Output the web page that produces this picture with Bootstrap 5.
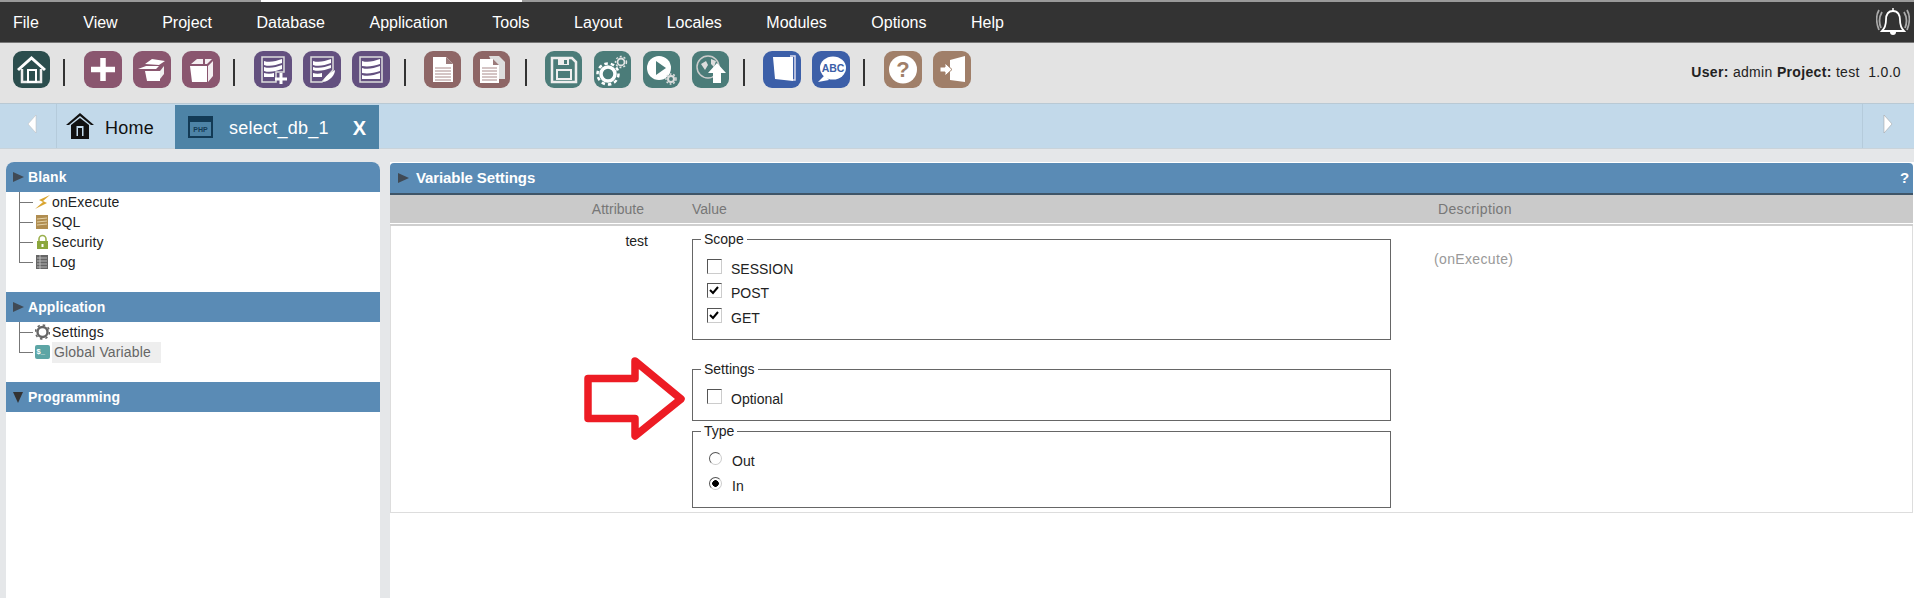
<!DOCTYPE html>
<html lang="en">
<head>
<meta charset="utf-8">
<title>Variable Settings</title>
<link href="https://cdn.jsdelivr.net/npm/bootstrap@5.3.0/dist/css/bootstrap.min.css" rel="stylesheet">
<style>
html,body{height:598px;overflow:hidden}
body{font-family:"Liberation Sans",Arial,sans-serif;font-size:14px;background:#e5e7e9;color:#222}
.top-strip{height:2px;background:#9a9a9a}
.top-strip i{display:block;height:2px;width:261px;margin-left:261px;background:#fff}
.menu-bar{height:41px;background:#333;border-bottom:1px solid #777;padding-left:13px;gap:44.500px;color:#fff;font-size:16px}
.menu-bar span{line-height:41px}
.bell-box{margin-left:auto;margin-right:4px}
.tool-bar{height:60px;background:#e3e3e3;padding-left:13px}
.tile{width:37px;height:37px;border-radius:9px;margin-top:8px;margin-right:12px;display:block;flex:none}
.tile.wide{width:38px;margin-right:11px}
.tile svg{display:block;width:100%;height:100%}
.sep{width:2px;height:27px;background:#333;margin:16px 18px 0 2px;flex:none}
.sep.s-a{margin-left:1px;margin-right:19px}
.sep.s-b{margin-right:19px}
.sep.s-c{margin-left:3px}
.sep.s-e{margin-right:19px}
.c-home{background:#2b4d4d}.c-mar{background:#8a566f}.c-pur{background:#63507f}.c-rose{background:#8e6666}.c-teal{background:#4b7c79}.c-blue{background:#3c5fa8}.c-tan{background:#a07f69}
.user-info{margin-left:auto;margin-right:13px;line-height:58px;font-size:14px;letter-spacing:.33px;white-space:pre;color:#222}
.tab-bar{height:46px;background:#c2d9ea;border-top:1px solid #b9c9d4;border-bottom:1px solid #c9d3da}
.nav-end{width:57px;flex:none;border-right:1px solid #b5cbdb;padding:0 0 4px 8px}
.nav-end.last{width:52px;margin-left:auto;border-right:0;border-left:1px solid #b5cbdb;padding:0 2px 4px 0}
.home-tab{width:118px;font-size:18px;color:#111;padding-left:8px;gap:10px}
.home-tab span{padding-top:5px;letter-spacing:.25px}
.cur-tab{width:204px;height:44px;margin-top:1px;background:#4d83a6;color:#fff;font-size:18px;padding-left:12px}
.cur-tab .x-mark{font-weight:700;font-size:20px;margin-left:24px;padding-top:2px}
.cur-tab .tab-name{margin-left:15px;padding-top:3px;letter-spacing:.25px}
.work{height:449px;padding-top:13px}
.side-col{width:374px;margin-left:6px;background:#fff;flex:none;border-radius:8px 8px 0 0}
.bar-head{height:30px;background:#5a8bb5;color:#fff;font-weight:700;font-size:14px;letter-spacing:.1px;padding-left:7px;gap:4px}
.bar-head.round{border-radius:8px 8px 0 0}
.bar-head .tri.down{margin-right:1px}
.tri{width:0;height:0;border-left:11px solid #404a55;border-top:5.500px solid transparent;border-bottom:5.500px solid transparent;flex:none}
.tri.down{border-left:5.500px solid transparent;border-right:5.500px solid transparent;border-top:11px solid #333;border-bottom:0}
.tree-list{list-style:none;margin:0 0 20px;padding:0 0 0 13px}
.tree-list li{height:20px;position:relative;padding-left:16px;gap:2px;color:#222;letter-spacing:.15px}
.tree-list li::before{content:"";position:absolute;left:0;top:0;bottom:0;width:1px;background:#777}
.tree-list li:last-child::before{bottom:10px}
.tree-list li::after{content:"";position:absolute;left:0;top:10px;width:14px;height:1px;background:#777}
.tree-ico{width:15px;height:16px;flex:none;display:block}
.sel-node{background:#eee;color:#666;padding:0 8px 0 2px;line-height:21px;width:109px;white-space:nowrap}
.main-col{margin-left:10px;flex:1;background:#fff;min-width:0;padding-top:1px}
.panel-head{height:32px;background:#5a8bb5;border-bottom:2px solid #3f5568;color:#fff;font-weight:700;font-size:15px;letter-spacing:-.1px;padding-left:8px;gap:7px;margin-right:1px;border-radius:4px 4px 0 0}
.panel-head .help{margin-left:auto;margin-right:4px}
.col-heads{height:28px;background:#cacaca;color:#777;margin-right:1px;border-bottom:0}
.c-a{width:257px;flex:none;text-align:right}
.c-v{width:699px;margin-left:44px;flex:none}
.c-d{margin-left:44px;letter-spacing:.35px}
.col-heads .c-a{padding-right:3px}
.col-heads .c-v{padding-left:1px}
.col-heads .c-d{padding-left:4px}
.rule{height:2px;margin-top:1px;background:#cfcfcf;margin-right:1px}
.data-row{position:relative;border:1px solid #ddd;border-top:0;height:287px;padding-top:3px;margin-right:1px}
.data-row .c-a{line-height:20px;padding-top:2px}
.data-row .c-d{color:#999;padding-top:20px;margin-left:43px}
.opt-set{border:1px solid #666;padding:5px 0 0 14px;margin:0;color:#222;min-width:0}
.opt-set legend{float:none;width:auto;font-size:14px;line-height:20px;margin:0 0 0 -6px;padding:0 3px}
.opt-set.s1{height:111px;margin-bottom:19px}
.opt-set.s2{height:62px;margin-bottom:0}
.opt-set.s3{height:87px}
.opt-row{height:24.500px;gap:9px;display:flex;align-items:center;margin:0;font-size:14px}
.opt-row span{position:relative;top:3px}
.opt-row input{appearance:none;-webkit-appearance:none;flex:none;margin:0;width:15px;height:15px;background:#fff;border:1px solid #ccc;border-top-color:#555;border-left-color:#555}
.opt-row input:checked{background:#fff url("data:image/svg+xml,%3Csvg xmlns='http://www.w3.org/2000/svg' viewBox='0 0 15 15'%3E%3Cpath d='M3 7l3 3 5-6' fill='none' stroke='%23000' stroke-width='2'/%3E%3C/svg%3E") center/15px no-repeat}
.opt-row input[type=radio]{width:13px;height:13px;margin-left:2px;border-radius:50%;margin-right:2px}
.opt-row input[type=radio]:checked{background:radial-gradient(circle,#000 0 3px,#fff 3.600px)}
.rad-row{height:25px;gap:8px}
.big-arrow{position:absolute;left:192px;top:130px;width:108px;height:86px;pointer-events:none}
</style>
</head>
<body>
<div class="top-strip"><i></i></div>
<div class="menu-bar d-flex align-items-start">
<span>File</span><span>View</span><span>Project</span><span>Database</span><span>Application</span><span>Tools</span><span>Layout</span><span>Locales</span><span>Modules</span><span>Options</span><span>Help</span>
<div class="bell-box">
<svg width="34" height="32" viewBox="0 0 34 32" class="mt-1"><path d="M17 5c-5 0-7 4-7 9 0 5-1 8-4 11h22c-3-3-4-6-4-11 0-5-2-9-7-9z" fill="none" stroke="#fff" stroke-width="1.800"/><path d="M14 26a3 3 0 0 0 6 0z" fill="#fff"/><path d="M17 2v3" stroke="#fff" stroke-width="1.500"/><path d="M6 6C3 11 3 17 5 22M3 4C0 9 0 17 3 24M28 6c3 5 3 11 1 16M31 4c3 5 3 13 0 20" fill="none" stroke="#aaa" stroke-width="1.800"/></svg>
</div>
</div>
<div class="tool-bar d-flex align-items-start">
<a class="tile c-home"><svg viewBox="0 0 37 37"><path d="M5 19 18.500 7 32 19" fill="none" stroke="#fff" stroke-width="3"/><path d="M9 18v13h19V18" fill="none" stroke="#eee" stroke-width="2.500"/><rect x="15" y="19" width="8" height="12" fill="none" stroke="#fff" stroke-width="2"/></svg></a><div class="sep s-a"></div>
<a class="tile wide c-mar"><svg viewBox="0 0 38 37"><path d="M19 7v23M7 18.500h24" stroke="#fff" stroke-width="5.500"/></svg></a>
<a class="tile wide c-mar"><svg viewBox="0 0 38 37"><path d="M12 20h15v10H14z" fill="#fff"/><path d="M5 18l8-3h13l-3 3zM12 13l7-5 13 2-6 4z" fill="#fff"/><path d="M27 20l4-5v8l-4 5z" fill="#eee"/></svg></a>
<a class="tile wide c-mar"><svg viewBox="0 0 38 37"><path d="M8 15h17v16H10z" fill="#fff"/><path d="M26 15l5-5v15l-5 6zM9 13l6-5h6v5zM23 13V8h7l-5 5z" fill="#fff" opacity=".9"/></svg></a>
<div class="sep s-b"></div>
<a class="tile wide c-pur"><svg viewBox="0 0 38 37"><path d="M8 6h22v15h-8v10H8z" fill="none" stroke="#ddd" stroke-width="1.500"/><path d="M10 10c6 2 12 0 18-2v4c-6 2-12 4-18 2zM10 16c6 2 12 0 18-2v4c-6 2-12 4-18 2zM10 22c3 1 7 1 10 0v4H10z" fill="#fff"/><path d="M27 22v11M21 28h12" stroke="#fff" stroke-width="3"/></svg></a>
<a class="tile wide c-pur"><svg viewBox="0 0 38 37"><path d="M8 6h22v13l-11 12H8z" fill="none" stroke="#ddd" stroke-width="1.500"/><path d="M10 10c6 2 12 0 18-2v4c-6 2-12 4-18 2zM10 16c6 2 12 0 18-2v3c-6 2-12 4-18 2zM10 22c3 1 6 1 9 0v4h-9z" fill="#fff"/><path d="M20 31c1-5 7-9 12-12 0 5-5 11-12 12z" fill="#fff"/></svg></a>
<a class="tile wide c-pur"><svg viewBox="0 0 38 37"><rect x="8" y="6" width="22" height="25" fill="none" stroke="#ddd" stroke-width="1.500"/><path d="M10 10c6 2 12 0 18-2v5c-6 2-12 3-18 2zM10 17c6 2 12 0 18-2v5c-6 2-12 3-18 2zM10 24c6 2 12 0 18-2v6H10z" fill="#fff"/></svg></a>
<div class="sep s-c"></div>
<a class="tile c-rose"><svg viewBox="0 0 37 37"><path d="M9 6h13l7 7v18H9z" fill="#fff"/><path d="M22 6l7 7h-7z" fill="#9b7b7b"/><path d="M11 17h16M11 20h16M11 23h16M11 26h16M11 29h16" stroke="#a98a8a" stroke-width="1"/></svg></a>
<a class="tile c-rose"><svg viewBox="0 0 37 37"><path d="M16 5h10l6 6v17h-6z" fill="#ddd"/><path d="M7 8h13l6 6v18H7z" fill="#fff"/><path d="M20 8l6 6h-6z" fill="#9b7b7b"/><path d="M9 17h15M9 20h15M9 23h15M9 26h15M9 29h15" stroke="#a98a8a"/></svg></a>
<div class="sep s-c"></div>
<a class="tile c-teal"><svg viewBox="0 0 37 37"><path d="M7 7h20l4 4v20H7z" fill="none" stroke="#eee" stroke-width="2.500"/><rect x="13" y="8" width="11" height="6" fill="#eee"/><rect x="19" y="9" width="3" height="4" fill="#4b7c79"/><rect x="12" y="19" width="14" height="9" fill="none" stroke="#eee" stroke-width="2"/></svg></a>
<a class="tile c-teal"><svg viewBox="0 0 37 37"><circle cx="14" cy="23" r="7" fill="none" stroke="#fff" stroke-width="3.500"/><circle cx="14" cy="23" r="10.500" fill="none" stroke="#fff" stroke-width="2.500" stroke-dasharray="3.500 3"/><circle cx="27" cy="11" r="3.500" fill="none" stroke="#e4e4e4" stroke-width="1.800"/><circle cx="27" cy="11" r="5.500" fill="none" stroke="#e4e4e4" stroke-width="1.400" stroke-dasharray="2 2"/></svg></a>
<a class="tile c-teal"><svg viewBox="0 0 37 37"><circle cx="16" cy="17" r="12" fill="#fff"/><path d="M13 10l10 7-10 7z" fill="#4b7c79"/><circle cx="28" cy="28" r="3" fill="none" stroke="#ddd" stroke-width="2"/><circle cx="28" cy="28" r="5" fill="none" stroke="#ddd" stroke-width="1.500" stroke-dasharray="1.800 1.800"/></svg></a>
<a class="tile c-teal"><svg viewBox="0 0 37 37"><circle cx="16" cy="16" r="11" fill="none" stroke="#ccc" stroke-width="1.500"/><path d="M9 13l5-3 2 4-3 5zM19 8l5 2-2 6-3-3z" fill="#ddd"/><path d="M25 12l9 10h-5v10h-8V22h-5z" fill="#fff"/></svg></a>
<div class="sep"></div>
<a class="tile wide c-blue"><svg viewBox="0 0 38 37"><path d="M10 6h20v24l-18-2z" fill="#fff"/><path d="M27 5h5v24h-2" fill="none" stroke="#dde" stroke-width="1.500"/></svg></a>
<a class="tile wide c-blue"><svg viewBox="0 0 38 37"><ellipse cx="21" cy="17" rx="13" ry="11.500" fill="#fff"/><path d="M13 24l-7 7 11-2z" fill="#fff"/><text x="21" y="21" text-anchor="middle" font-size="10.500" font-weight="700" fill="#3c5fa8" font-family="Liberation Sans">ABC</text></svg></a>
<div class="sep s-e"></div>
<a class="tile wide c-tan"><svg viewBox="0 0 38 37"><circle cx="19" cy="18.500" r="14" fill="#fff"/><text x="19" y="26" text-anchor="middle" font-size="22" font-weight="700" fill="#a07f69" font-family="Liberation Sans">?</text></svg></a>
<a class="tile wide c-tan"><svg viewBox="0 0 38 37"><path d="M17 9l15-4v26l-15-2z" fill="#fff"/><path d="M7 16h5v-4l7 6.500-7 6.500v-4H7z" fill="#fff" stroke="#a07f69"/></svg></a>
<div class="user-info"><b>User:</b> admin <b>Project:</b> test  1.0.0</div>
</div>
<div class="tab-bar d-flex">
<div class="nav-end d-flex align-items-center justify-content-center"><svg width="12" height="22" viewBox="0 0 12 22"><path d="M10 2v18L2 11z" fill="#fff" stroke="#bbb" stroke-width=".5"/></svg></div>
<div class="home-tab d-flex align-items-center">
<svg width="30" height="28" viewBox="0 0 30 28"><path d="M15 1 1 13h3l11-9 11 9h3z" fill="#111"/><path d="M6 13 15 6l9 7v14H6z" fill="#111"/><rect x="11.500" y="14" width="7" height="10" fill="#c2d9ea"/><rect x="13" y="16" width="4" height="8" fill="#111"/></svg>
<span>Home</span></div>
<div class="cur-tab d-flex align-items-center">
<svg width="27" height="24" viewBox="0 0 27 24"><rect x="1" y="1" width="25" height="22" fill="#123a55"/><rect x="3" y="7" width="21" height="14" fill="#4d83a6"/><text x="13.500" y="17" text-anchor="middle" font-size="7" font-weight="700" fill="#123a55" font-family="Liberation Sans">PHP</text></svg>
<span class="tab-name">select_db_1</span><span class="x-mark">X</span></div>
<div class="nav-end last d-flex align-items-center justify-content-center"><svg width="12" height="22" viewBox="0 0 12 22"><path d="M2 2v18l8-9z" fill="#fff" stroke="#999" stroke-width=".5"/></svg></div>
</div>
<div class="work d-flex">
<div class="side-col">
<div class="bar-head round d-flex align-items-center"><i class="tri"></i>Blank</div>
<ul class="tree-list">
<li class="d-flex align-items-center"><svg class="tree-ico" viewBox="0 0 15 16"><path d="M15 1 4 6l4 2-8 7 12-6-4-2z" fill="#d9a531"/></svg>onExecute</li>
<li class="d-flex align-items-center"><svg class="tree-ico" viewBox="0 0 15 16"><rect x="1" y="1" width="12" height="14" fill="#b08d50"/><path d="M2 5l10-1M2 8l10-1M2 11l10-1" stroke="#e4d2a8"/></svg>SQL</li>
<li class="d-flex align-items-center"><svg class="tree-ico" viewBox="0 0 15 16"><path d="M4 8V5a3.500 3.500 0 0 1 7 0v3" fill="none" stroke="#9bb04e" stroke-width="1.600"/><rect x="2" y="7" width="11" height="8" fill="#8ba63c"/><rect x="6.500" y="10" width="2" height="3" fill="#fff"/></svg>Security</li>
<li class="d-flex align-items-center"><svg class="tree-ico" viewBox="0 0 15 16"><rect x="1" y="1" width="12" height="14" fill="#666"/><path d="M2 4h10M2 7h10M2 10h10M2 13h10M5 1v14" stroke="#ccc" stroke-width=".8"/></svg>Log</li>
</ul>
<div class="bar-head d-flex align-items-center"><i class="tri"></i>Application</div>
<ul class="tree-list">
<li class="d-flex align-items-center"><svg class="tree-ico" viewBox="0 0 15 16"><circle cx="7.500" cy="8" r="5" fill="none" stroke="#666" stroke-width="2.400"/><circle cx="7.500" cy="8" r="7" fill="none" stroke="#666" stroke-width="1.600" stroke-dasharray="2.500 3"/></svg>Settings</li>
<li class="d-flex align-items-center"><svg class="tree-ico" viewBox="0 0 15 16"><rect x="0" y="1" width="15" height="14" rx="2" fill="#5da5a5"/><text x="1.500" y="10" font-size="7.500" font-weight="700" fill="#fff" font-family="Liberation Sans">$_</text></svg><span class="sel-node">Global Variable</span></li>
</ul>
<div class="bar-head d-flex align-items-center"><i class="tri down"></i>Programming</div>
</div>
<div class="main-col">
<div class="panel-head d-flex align-items-center"><i class="tri"></i>Variable Settings<span class="help">?</span></div>
<div class="col-heads d-flex align-items-center"><div class="c-a">Attribute</div><div class="c-v">Value</div><div class="c-d">Description</div></div>
<div class="rule"></div>
<div class="data-row d-flex">
<div class="c-a">test</div>
<div class="c-v">
<fieldset class="opt-set s1"><legend>Scope</legend>
<label class="opt-row"><input type="checkbox"><span>SESSION</span></label>
<label class="opt-row"><input type="checkbox" checked><span>POST</span></label>
<label class="opt-row"><input type="checkbox" checked><span>GET</span></label>
</fieldset>
<fieldset class="opt-set s2"><legend>Settings</legend>
<label class="opt-row"><input type="checkbox"><span>Optional</span></label>
</fieldset>
<fieldset class="opt-set s3"><legend>Type</legend>
<label class="opt-row rad-row"><input type="radio" name="vtype"><span>Out</span></label>
<label class="opt-row rad-row"><input type="radio" name="vtype" checked><span>In</span></label>
</fieldset>
</div>
<div class="c-d">(onExecute)</div>
<svg class="big-arrow" viewBox="0 0 108 86"><path d="M5 22.500H52V5L98 43 52 80V62.500H5z" fill="none" stroke="#ed1c24" stroke-width="7.500" stroke-linejoin="round"/></svg>
</div>
</div>
</div>
<script src="https://cdn.jsdelivr.net/npm/bootstrap@5.3.0/dist/js/bootstrap.bundle.min.js"></script>
</body>
</html>
